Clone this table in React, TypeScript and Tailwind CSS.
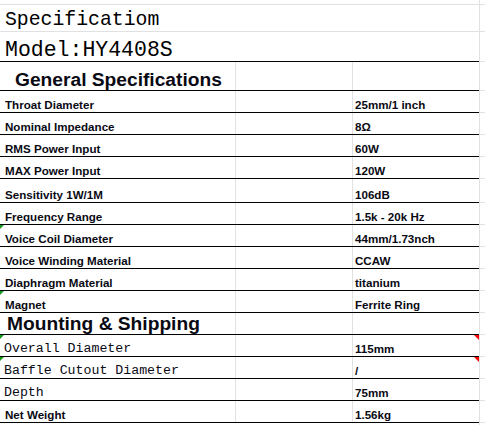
const general: [string, string, boolean?, boolean?][] = [
  ["Throat Diameter", "25mm/1 inch"],
  ["Nominal Impedance", "8Ω"],
  ["RMS Power Input", "60W"],
  ["MAX Power Input", "120W"],
  ["Sensitivity 1W/1M", "106dB", false, true],
  ["Frequency Range", "1.5k - 20k Hz"],
  ["Voice Coil Diameter", "44mm/1.73nch", true],
  ["Voice Winding Material", "CCAW"],
  ["Diaphragm Material", "titanium"],
  ["Magnet", "Ferrite Ring", true],
];

const mounting: { label: string; value: string; mono?: boolean; flag?: boolean }[] = [
  { label: "Overall Diameter", value: "115mm", mono: true, flag: true },
  { label: "Baffle Cutout Diameter", value: "/", mono: true, flag: true },
  { label: "Depth", value: "75mm", mono: true },
  { label: "Net Weight", value: "1.56kg" },
];

function Gutter() {
  return <div className="flex-1 border-l border-b border-[#e1e1e1]" />;
}

function GreenTip() {
  return (
    <span className="absolute left-0 top-0 h-0 w-0 border-t-[4px] border-r-[4px] border-t-[#1a9a1a] border-r-transparent" />
  );
}

function RedTip() {
  return (
    <span className="absolute right-0 top-0 h-0 w-0 border-t-[5px] border-l-[5px] border-t-[#ff0000] border-l-transparent" />
  );
}

function DataRow({
  label,
  value,
  tall,
  green,
  red,
  mono,
}: {
  label: string;
  value: string;
  tall?: boolean;
  green?: boolean;
  red?: boolean;
  mono?: boolean;
}) {
  return (
    <div className={tall ? "flex h-[24px]" : "flex h-[22px]"}>
      <div className="relative flex w-[479px] border-b border-black">
        {green && <GreenTip />}
        {mono ? (
          <div className="flex w-[236px] items-end border-r border-[#e1e1e1] pb-[1px] pl-[4px] font-['Liberation_Mono',monospace] text-[13.25px] leading-none">
            {label}
          </div>
        ) : (
          <div className="flex w-[236px] items-end border-r border-[#e1e1e1] pl-[5px] text-[11.6px] font-bold leading-[14px]">
            {label}
          </div>
        )}
        <div className="w-[117px] border-r border-[#e1e1e1]" />
        <div className="relative flex flex-1 items-end pl-[2px] text-[11.6px] font-bold leading-[14px]">
          {red && <RedTip />}
          {value}
        </div>
      </div>
      <Gutter />
    </div>
  );
}

function HeaderRow({ title, h, pl }: { title: string; h: string; pl: string }) {
  return (
    <div className={`flex ${h}`}>
      <div className="flex w-[479px] border-b border-black">
        <div
          className={`flex w-[236px] items-end whitespace-nowrap border-r border-[#e1e1e1] pb-[1px] ${pl} text-[19.2px] font-bold leading-none`}
        >
          {title}
        </div>
        <div className="w-[117px] border-r border-[#e1e1e1]" />
        <div className="flex-1" />
      </div>
      <Gutter />
    </div>
  );
}

export default function App() {
  return (
    <div className="flex h-[425px] w-[485px] flex-col overflow-hidden bg-white font-['Liberation_Sans',Arial,sans-serif] text-[#0a0a14]">
      <div className="flex h-[5px]">
        <div className="w-[479px] border-b border-[#e1e1e1]" />
        <Gutter />
      </div>

      <div className="flex h-[27px]">
        <div className="flex w-[479px] items-end border-b border-[#e1e1e1] pl-[5px] font-['Liberation_Mono',monospace] text-[19.8px] leading-none text-black">
          Specificatiom
        </div>
        <Gutter />
      </div>

      <div className="flex h-[30px]">
        <div className="flex w-[479px] items-end border-b border-black pl-[5px] font-['Liberation_Mono',monospace] text-[21.5px] leading-none text-black">
          Model:HY4408S
        </div>
        <Gutter />
      </div>

      <HeaderRow title="General Specifications" h="h-[29px]" pl="pl-[15px]" />

      {general.map(([label, value, green, tall]) => (
        <DataRow key={label} label={label} value={value} green={green} tall={tall} />
      ))}

      <HeaderRow title="Mounting & Shipping" h="h-[22px]" pl="pl-[7px]" />

      {mounting.map((r) => (
        <DataRow
          key={r.label}
          label={r.label}
          value={r.value}
          mono={r.mono}
          green={r.flag}
          red={r.flag}
        />
      ))}

      <div className="flex flex-1">
        <div className="w-[479px]" />
        <div className="flex-1 border-l border-[#e1e1e1]" />
      </div>
    </div>
  );
}
